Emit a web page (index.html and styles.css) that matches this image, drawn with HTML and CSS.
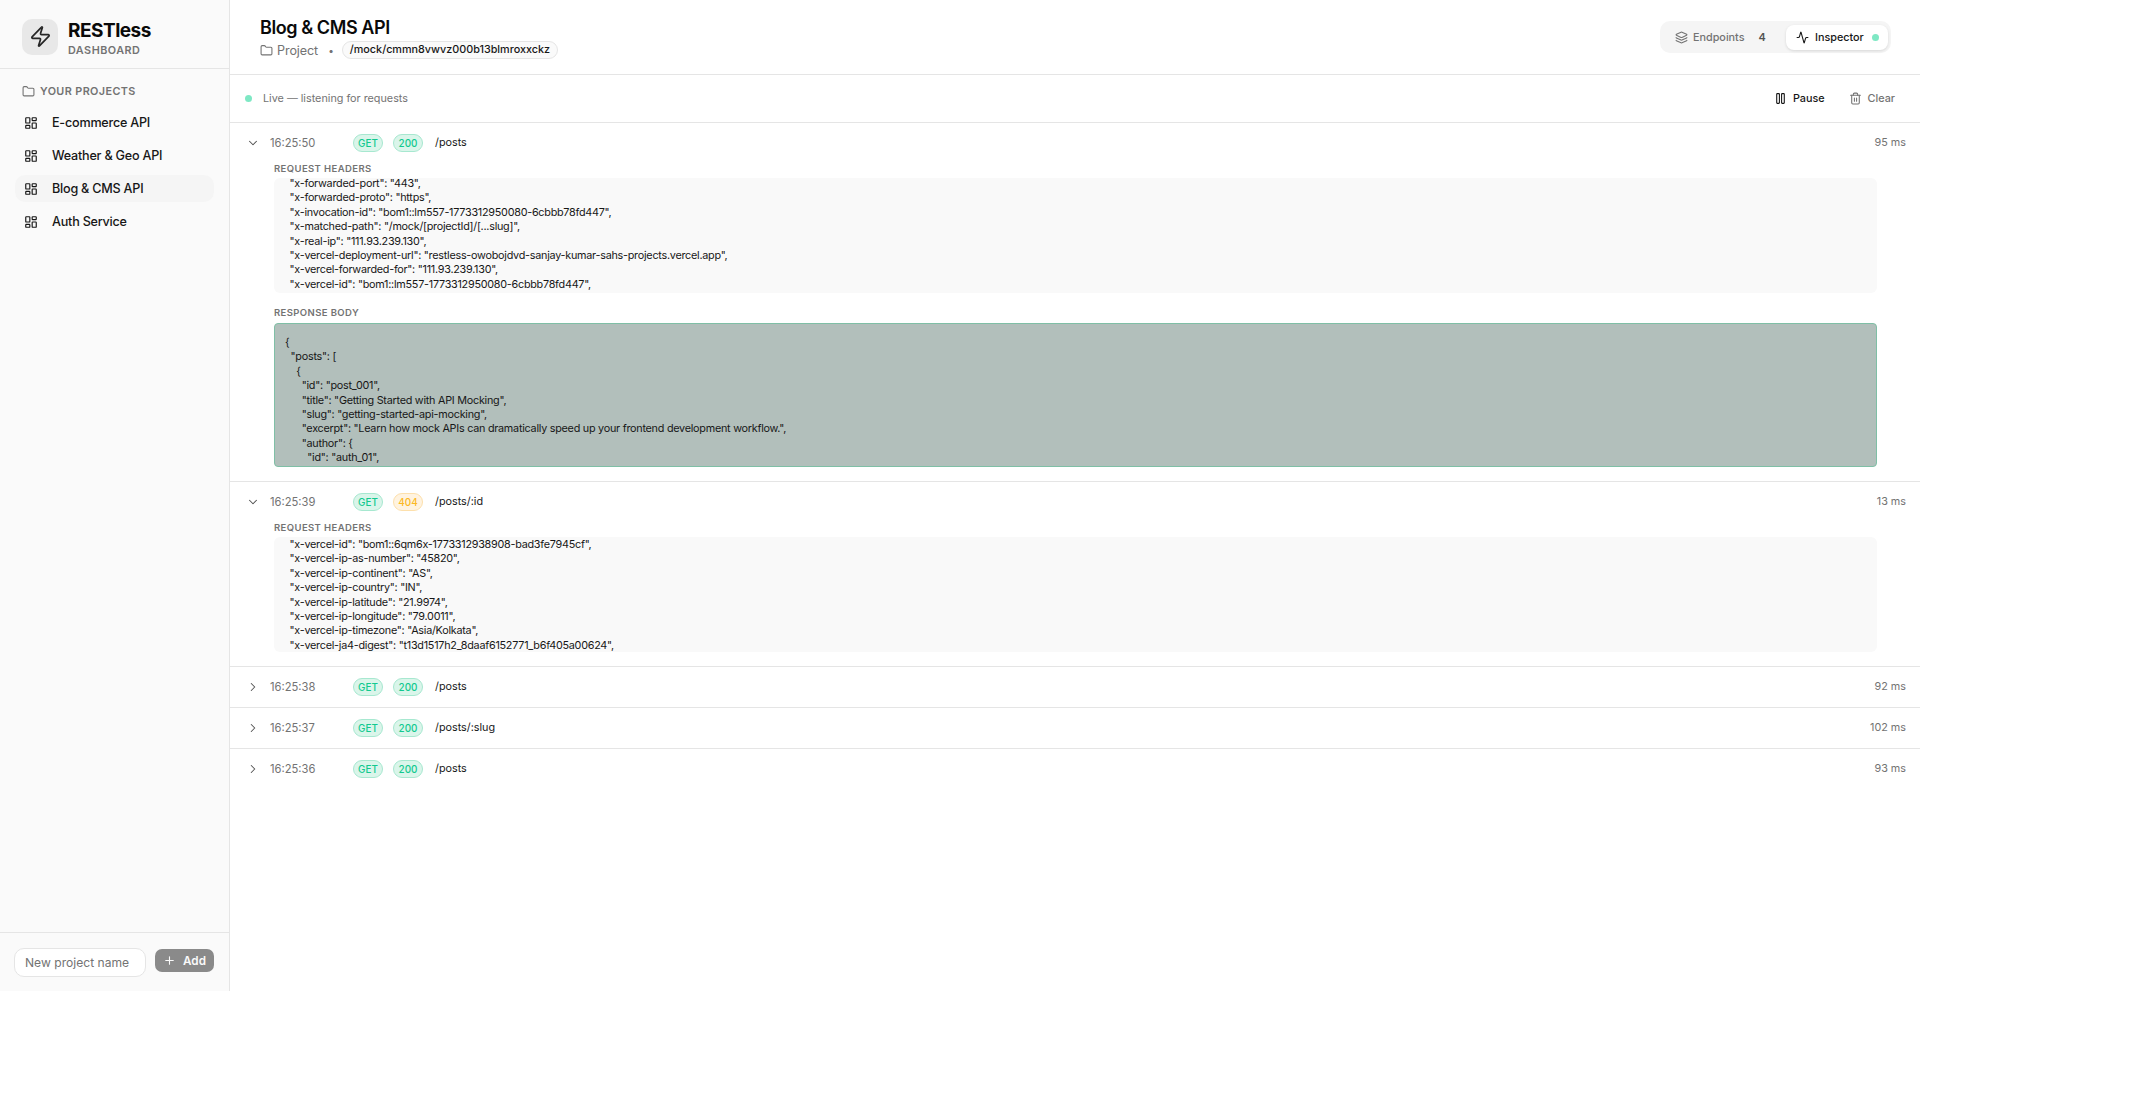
FILE: index.html
```html
<!DOCTYPE html>
<html lang="en">
<head>
<meta charset="utf-8">
<title>RESTless Dashboard</title>
<link rel="stylesheet" href="styles.css">
</head>
<body>
<svg class="defs" aria-hidden="true">
  <symbol id="i-zap" viewBox="0 0 24 24"><path d="M4 14a1 1 0 0 1-.78-1.63l9.9-10.2a.5.5 0 0 1 .86.46l-1.92 6.02A1 1 0 0 0 13 10h7a1 1 0 0 1 .78 1.63l-9.9 10.2a.5.5 0 0 1-.86-.46l1.92-6.02A1 1 0 0 0 11 14z"/></symbol>
  <symbol id="i-folder" viewBox="0 0 24 24"><path d="M20 20a2 2 0 0 0 2-2V8a2 2 0 0 0-2-2h-7.9a2 2 0 0 1-1.69-.9L9.6 3.9A2 2 0 0 0 7.93 3H4a2 2 0 0 0-2 2v13a2 2 0 0 0 2 2Z"/></symbol>
  <symbol id="i-grid" viewBox="0 0 24 24"><rect x="3" y="3" width="7" height="9" rx="1"/><rect x="14" y="3" width="7" height="5" rx="1"/><rect x="14" y="12" width="7" height="9" rx="1"/><rect x="3" y="16" width="7" height="5" rx="1"/></symbol>
  <symbol id="i-layers" viewBox="0 0 24 24"><path d="M12.83 2.18a2 2 0 0 0-1.66 0L2.6 6.08a1 1 0 0 0 0 1.83l8.58 3.91a2 2 0 0 0 1.66 0l8.58-3.9a1 1 0 0 0 0-1.83z"/><path d="M2 12a1 1 0 0 0 .58.91l8.6 3.91a2 2 0 0 0 1.65 0l8.58-3.9A1 1 0 0 0 22 12"/><path d="M2 17a1 1 0 0 0 .58.91l8.6 3.91a2 2 0 0 0 1.65 0l8.58-3.9A1 1 0 0 0 22 17"/></symbol>
  <symbol id="i-activity" viewBox="0 0 24 24"><path d="M22 12h-2.48a2 2 0 0 0-1.93 1.46l-2.35 8.36a.25.25 0 0 1-.48 0L9.24 2.18a.25.25 0 0 0-.48 0l-2.35 8.36A2 2 0 0 1 4.49 12H2"/></symbol>
  <symbol id="i-pause" viewBox="0 0 24 24"><rect x="14" y="3" width="5" height="18" rx="1"/><rect x="5" y="3" width="5" height="18" rx="1"/></symbol>
  <symbol id="i-trash" viewBox="0 0 24 24"><path d="M3 6h18"/><path d="M19 6v14c0 1-1 2-2 2H7c-1 0-2-1-2-2V6"/><path d="M8 6V4c0-1 1-2 2-2h4c1 0 2 1 2 2v2"/><path d="M10 11v6"/><path d="M14 11v6"/></symbol>
  <symbol id="i-down" viewBox="0 0 24 24"><path d="m6 9 6 6 6-6"/></symbol>
  <symbol id="i-right" viewBox="0 0 24 24"><path d="m9 18 6-6-6-6"/></symbol>
  <symbol id="i-plus" viewBox="0 0 24 24"><path d="M5 12h14"/><path d="M12 5v14"/></symbol>
</svg>

<div class="app">
  <aside class="sidebar">
    <div class="brand">
      <div class="logo"><svg class="ico ico-logo"><use href="#i-zap"/></svg></div>
      <div class="brand-text">
        <div class="brand-name">RESTless</div>
        <div class="brand-sub">DASHBOARD</div>
      </div>
    </div>
    <nav class="nav">
      <div class="nav-title"><svg class="ico ico-13"><use href="#i-folder"/></svg>YOUR PROJECTS</div>
      <a class="nav-item"><svg class="ico ico-14"><use href="#i-grid"/></svg>E-commerce API</a>
      <a class="nav-item"><svg class="ico ico-14"><use href="#i-grid"/></svg>Weather &amp; Geo API</a>
      <a class="nav-item active"><svg class="ico ico-14"><use href="#i-grid"/></svg>Blog &amp; CMS API</a>
      <a class="nav-item"><svg class="ico ico-14"><use href="#i-grid"/></svg>Auth Service</a>
    </nav>
    <form class="new-project">
      <input class="new-input" type="text" placeholder="New project name">
      <button class="add-btn" type="button"><svg class="ico ico-13"><use href="#i-plus"/></svg>Add</button>
    </form>
  </aside>

  <main class="main">
    <header class="header">
      <div>
        <h1 class="title">Blog &amp; CMS API</h1>
        <div class="meta">
          <span class="meta-project"><svg class="ico ico-13"><use href="#i-folder"/></svg>Project</span>
          <span class="meta-dot">•</span>
          <code class="mock-url">/mock/cmmn8vwvz000b13blmroxxckz</code>
        </div>
      </div>
      <div class="tabs">
        <button class="tab"><svg class="ico ico-13"><use href="#i-layers"/></svg>Endpoints<span class="tab-count">4</span></button>
        <button class="tab tab-active"><svg class="ico ico-13"><use href="#i-activity"/></svg>Inspector<span class="dot"></span></button>
      </div>
    </header>

    <div class="toolbar">
      <div class="live"><span class="dot"></span>Live — listening for requests</div>
      <div class="actions">
        <button class="action action-dark"><svg class="ico ico-13"><use href="#i-pause"/></svg>Pause</button>
        <button class="action"><svg class="ico ico-13"><use href="#i-trash"/></svg>Clear</button>
      </div>
    </div>

    <section class="req">
      <div class="req-row">
        <svg class="ico chev"><use href="#i-down"/></svg>
        <span class="time">16:25:50</span>
        <span class="badge ok">GET</span><span class="badge ok">200</span>
        <span class="path">/posts</span>
        <span class="ms">95 ms</span>
      </div>
      <div class="detail">
        <div class="label">REQUEST HEADERS</div>
        <div class="headers"><pre class="code scrolled">  "x-forwarded-port": "443",
  "x-forwarded-proto": "https",
  "x-invocation-id": "bom1::lm557-1773312950080-6cbbb78fd447",
  "x-matched-path": "/mock/[projectId]/[...slug]",
  "x-real-ip": "111.93.239.130",
  "x-vercel-deployment-url": "restless-owobojdvd-sanjay-kumar-sahs-projects.vercel.app",
  "x-vercel-forwarded-for": "111.93.239.130",
  "x-vercel-id": "bom1::lm557-1773312950080-6cbbb78fd447",</pre></div>
        <div class="label label-gap">RESPONSE BODY</div>
        <div class="response"><pre class="code">{
  "posts": [
    {
      "id": "post_001",
      "title": "Getting Started with API Mocking",
      "slug": "getting-started-api-mocking",
      "excerpt": "Learn how mock APIs can dramatically speed up your frontend development workflow.",
      "author": {
        "id": "auth_01",</pre></div>
      </div>
    </section>

    <section class="req">
      <div class="req-row">
        <svg class="ico chev"><use href="#i-down"/></svg>
        <span class="time">16:25:39</span>
        <span class="badge ok">GET</span><span class="badge warn">404</span>
        <span class="path">/posts/:id</span>
        <span class="ms">13 ms</span>
      </div>
      <div class="detail">
        <div class="label">REQUEST HEADERS</div>
        <div class="headers"><pre class="code nudged">  "x-vercel-id": "bom1::6qm6x-1773312938908-bad3fe7945cf",
  "x-vercel-ip-as-number": "45820",
  "x-vercel-ip-continent": "AS",
  "x-vercel-ip-country": "IN",
  "x-vercel-ip-latitude": "21.9974",
  "x-vercel-ip-longitude": "79.0011",
  "x-vercel-ip-timezone": "Asia/Kolkata",
  "x-vercel-ja4-digest": "t13d1517h2_8daaf6152771_b6f405a00624",</pre></div>
      </div>
    </section>

    <section class="req">
      <div class="req-row">
        <svg class="ico chev"><use href="#i-right"/></svg>
        <span class="time">16:25:38</span>
        <span class="badge ok">GET</span><span class="badge ok">200</span>
        <span class="path">/posts</span>
        <span class="ms">92 ms</span>
      </div>
    </section>
    <section class="req">
      <div class="req-row">
        <svg class="ico chev"><use href="#i-right"/></svg>
        <span class="time">16:25:37</span>
        <span class="badge ok">GET</span><span class="badge ok">200</span>
        <span class="path">/posts/:slug</span>
        <span class="ms">102 ms</span>
      </div>
    </section>
    <section class="req req-last">
      <div class="req-row">
        <svg class="ico chev"><use href="#i-right"/></svg>
        <span class="time">16:25:36</span>
        <span class="badge ok">GET</span><span class="badge ok">200</span>
        <span class="path">/posts</span>
        <span class="ms">93 ms</span>
      </div>
    </section>
  </main>
</div>
</body>
</html>
```

FILE: styles.css
```css
* { box-sizing: border-box; }
html, body { margin: 0; padding: 0; background: #fff; }
body {
  font-family: Inter, "Liberation Sans", sans-serif;
  color: #171717;
  font-size: 12px;
}
.defs { position: absolute; width: 0; height: 0; overflow: hidden; }
.ico {
  display: block;
  flex: none;
  fill: none;
  stroke: currentColor;
  stroke-width: 2;
  stroke-linecap: round;
  stroke-linejoin: round;
}
.ico-13 { width: 13px; height: 13px; }
.ico-14 { width: 14px; height: 14px; }
.ico-logo { width: 23px; height: 23px; stroke-width: 1.8; color: #262626; }

.app { display: flex; width: 1920px; height: 991px; }

/* Sidebar */
.sidebar {
  width: 230px;
  flex: none;
  display: flex;
  flex-direction: column;
  background: #fafafa;
  border-right: 1px solid #e5e5e5;
}
.brand {
  display: flex;
  align-items: center;
  gap: 10px;
  height: 69px;
  padding: 5px 0 0 22px;
  border-bottom: 1px solid #e5e5e5;
}
.logo {
  width: 36px;
  height: 36px;
  border-radius: 10px;
  background: #e8e8e8;
  display: flex;
  align-items: center;
  justify-content: center;
}
.brand-text { padding-top: 4px; }
.brand-name { font-size: 19px; line-height: 22px; font-weight: 700; letter-spacing: -0.5px; color: #0a0a0a; }
.brand-sub { font-size: 10.8px; line-height: 14px; margin-top: 2px; font-weight: 600; letter-spacing: 0.5px; color: #737373; }
.nav { flex: 1; padding: 15px 15px 0; }
.nav-title {
  display: flex;
  align-items: center;
  gap: 5px;
  height: 14px;
  padding-left: 7px;
  font-size: 10.8px;
  font-weight: 600;
  letter-spacing: 0.4px;
  color: #737373;
  margin-bottom: 11px;
}
.nav-item {
  display: flex;
  align-items: center;
  gap: 14px;
  height: 27px;
  padding-left: 9px;
  margin-bottom: 6px;
  border-radius: 10px;
  font-size: 12.6px;
  font-weight: 500;
  letter-spacing: -0.22px;
  color: #171717;
}
.nav-item.active { background: #f5f5f5; }
.new-project {
  height: 59px;
  border-top: 1px solid #e5e5e5;
  display: flex;
  align-items: flex-start;
  gap: 9px;
  padding: 15px 15px 0 14px;
}
.new-input {
  width: 132px;
  height: 29px;
  border: 1px solid #e5e5e5;
  border-radius: 10px;
  background: #fff;
  padding: 0 10px;
  font: 400 12.1px Inter, "Liberation Sans", sans-serif;
  outline: none;
}
.new-input::placeholder { color: #737373; }
.add-btn {
  width: 59px;
  height: 23px;
  margin-top: 1px;
  border: 0;
  border-radius: 7px;
  background: #8a8a8a;
  color: #fafafa;
  display: flex;
  align-items: center;
  justify-content: center;
  gap: 7px;
  font: 600 11.7px Inter, "Liberation Sans", sans-serif;
  padding: 0;
}

/* Main */
.main { flex: 1; min-width: 0; }
.header {
  height: 75px;
  border-bottom: 1px solid #e5e5e5;
  display: flex;
  justify-content: space-between;
  align-items: center;
  padding: 0 29px 0 30px;
}
.title { margin: 2px 0 0; font-size: 18px; line-height: 24px; font-weight: 600; letter-spacing: -0.42px; color: #0a0a0a; }
.meta { display: flex; align-items: center; margin-top: 0; height: 20px; }
.meta-project { display: flex; align-items: center; gap: 4px; color: #737373; font-size: 12.6px; letter-spacing: -0.1px; }
.meta-dot { margin: 0 8px 0 10px; color: #737373; font-size: 10px; }
.mock-url {
  font: 500 10.8px Inter, "Liberation Sans", sans-serif;
  height: 18px;
  line-height: 16px;
  padding: 0 7px;
  border: 1px solid #e5e5e5;
  border-radius: 9px;
  background: #fafafa;
  color: #171717;
}
.tabs {
  display: flex;
  align-items: center;
  height: 32px;
  width: 231px;
  padding: 3px;
  border-radius: 10px;
  background: #f5f5f5;
  justify-content: space-between;
}
.tab {
  display: flex;
  align-items: center;
  height: 25px;
  border: 0;
  background: none;
  border-radius: 8px;
  gap: 5px;
  padding: 0 0 0 12px;
  font: 500 10.8px Inter, "Liberation Sans", sans-serif;
  color: #737373;
}
.tab-count { margin-left: 9px; font-size: 10.8px; font-weight: 600; color: #525252; }
.tab-active {
  width: 102px;
  padding-left: 10px;
  background: #fff;
  color: #171717;
  box-shadow: 0 1px 3px rgba(0, 0, 0, .12);
  gap: 6px;
}
.tab-active .dot { margin-left: 2px; }
.dot { width: 7px; height: 7px; border-radius: 50%; background: #7ee8c4; flex: none; }

.toolbar {
  height: 48px;
  border-bottom: 1px solid #e5e5e5;
  display: flex;
  align-items: center;
  justify-content: space-between;
  padding: 0 25px 0 15px;
}
.live { display: flex; align-items: center; gap: 11px; font-size: 10.8px; color: #737373; }
.actions { display: flex; gap: 24px; }
.action {
  display: flex;
  align-items: center;
  gap: 6px;
  border: 0;
  background: none;
  padding: 0;
  font: 500 10.8px Inter, "Liberation Sans", sans-serif;
  color: #737373;
}
.action-dark { color: #171717; }

.req { border-bottom: 1px solid #e5e5e5; }
.req-last { border-bottom: 0; }
.req-row {
  display: flex;
  align-items: center;
  height: 40px;
  padding: 0 14px 1px 16px;
}
.chev { width: 14px; height: 14px; color: #525252; stroke-width: 1.8; }
.time { width: 83px; margin-left: 10px; font-size: 11.2px; color: #737373; }
.badge {
  width: 30px;
  height: 18px;
  border-radius: 9px;
  border: 1px solid;
  margin-right: 10px;
  display: flex;
  align-items: center;
  justify-content: center;
  font-size: 9.9px;
  font-weight: 500;
}
.ok { background: #daf5ea; border-color: #a7e8d0; color: #12c98f; }
.warn { background: #fff3e0; border-color: #fde0ac; color: #fbb824; }
.path { margin-left: 2px; font-size: 10.8px; color: #171717; }
.ms { margin-left: auto; font-size: 10.8px; color: #737373; }

.detail { padding: 0 43px 14px 44px; }
.label {
  height: 15px;
  line-height: 12px;
  font-size: 9.5px;
  font-weight: 600;
  letter-spacing: 0.4px;
  color: #737373;
}
.label-gap { margin-top: 14px; height: 16px; }
.headers {
  height: 115px;
  overflow: hidden;
  border-radius: 6px;
  background: #f9f9f9;
}
.response {
  height: 144px;
  overflow: hidden;
  border: 1px solid #7fbfa6;
  border-radius: 4px;
  background: #b2bfbb;
  padding-top: 12px;
}
.code {
  margin: 0;
  padding: 0 10px;
  font: 400 10.8px/14.4px Inter, "Liberation Sans", sans-serif;
  letter-spacing: -0.25px;
  color: #171717;
  white-space: pre;
}
.response .code { padding-left: 10px; }
.scrolled { margin-top: -1px; }
.nudged { margin-top: 1px; }
```
